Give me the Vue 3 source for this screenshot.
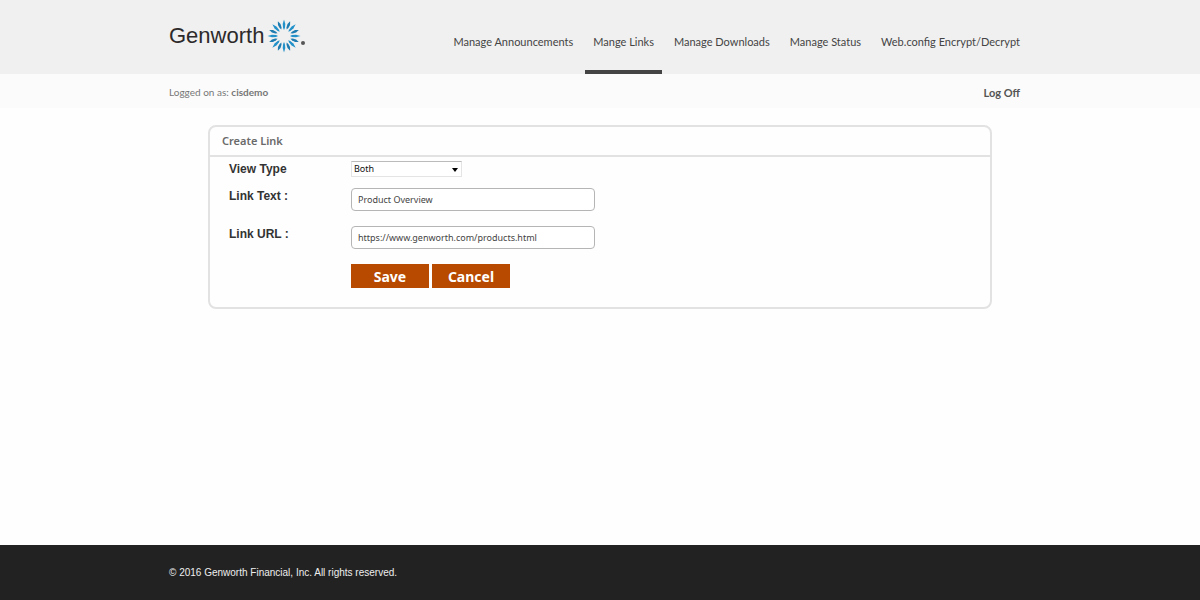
<template>
  <div class="page">
    <header class="header">
      <div class="container header-inner">
        <a href="#" class="logo">
          <span class="logo-text">Genworth</span>
          <svg class="logo-burst" viewBox="-17 -17 34 34" aria-hidden="true">
            <g v-for="n in 8" :key="n" :transform="`rotate(${n * 45})`">
              <path d="M0 -16.5 L1.3 -12 L0.9 -8 L0 -6 L-0.9 -8 L-1.3 -12 Z" fill="#2391c9" />
              <path
                d="M0 -16 L1.4 -12.5 L1 -9 L0 -7 L-1 -9 L-1.4 -12.5 Z"
                fill="#1f7cb0"
                transform="rotate(22.5)"
              />
            </g>
          </svg>
          <span class="logo-mark"></span>
        </a>
        <nav class="nav">
          <a
            v-for="item in navItems"
            :key="item"
            href="#"
            class="nav-link"
            :class="{ active: item === activeItem }"
          >{{ item }}</a>
        </nav>
      </div>
    </header>

    <div class="user-bar">
      <div class="container user-inner">
        <span>Logged on as: <strong>{{ userName }}</strong></span>
        <a href="#" class="log-off">Log Off</a>
      </div>
    </div>

    <main class="content">
      <section class="card">
        <h1 class="card-title">Create Link</h1>
        <form class="form" @submit.prevent>
          <div class="row row-select">
            <label for="view-type">View Type</label>
            <div class="select-wrap">
              <select id="view-type" v-model="viewType">
                <option>Both</option>
                <option>Internal</option>
                <option>External</option>
              </select>
              <span class="arrow"></span>
            </div>
          </div>
          <div class="row">
            <label for="link-text">Link Text :</label>
            <input id="link-text" v-model="linkText" type="text" />
          </div>
          <div class="row">
            <label for="link-url">Link URL :</label>
            <input id="link-url" v-model="linkUrl" type="text" />
          </div>
          <div class="actions">
            <button type="submit">Save</button>
            <button type="button">Cancel</button>
          </div>
        </form>
      </section>
    </main>

    <footer class="footer">
      <div class="container">© 2016 Genworth Financial, Inc. All rights reserved.</div>
    </footer>
  </div>
</template>

<script setup>
import { ref } from 'vue'

const navItems = [
  'Manage Announcements',
  'Mange Links',
  'Manage Downloads',
  'Manage Status',
  'Web.config Encrypt/Decrypt'
]
const activeItem = 'Mange Links'
const userName = 'cisdemo'

const viewType = ref('Both')
const linkText = ref('Product Overview')
const linkUrl = ref('https://www.genworth.com/products.html')
</script>

<style>
body {
  background: #fefefe;
}
</style>

<style scoped>
.page {
  display: flex;
  flex-direction: column;
  min-height: 100vh;
  font-family: "Noto Sans", "Open Sans", sans-serif;
  color: #444;
}

.container {
  box-sizing: border-box;
  width: 100%;
  max-width: 862px;
  margin: 0 auto;
}

a {
  color: inherit;
  text-decoration: none;
}

.header {
  background: #f0f0f0;
}

.header-inner {
  display: flex;
  justify-content: space-between;
  padding-right: 3px;
}

.logo {
  display: flex;
  align-items: center;
  height: 72px;
}

.logo-text {
  font-family: "Liberation Sans", Arial, sans-serif;
  font-size: 22px;
  color: #2d2a2b;
}

.logo-burst {
  width: 34px;
  height: 34px;
  margin-left: 3px;
}

.logo-mark {
  width: 4px;
  height: 4px;
  margin-top: 14px;
  border-radius: 50%;
  background: #555;
}

.nav {
  display: flex;
  gap: 4px;
}

.nav-link {
  box-sizing: border-box;
  height: 74px;
  padding: 34px 8px 0;
  border-bottom: 4px solid transparent;
  font-family: Lato, sans-serif;
  font-size: 11px;
  line-height: 16px;
  white-space: nowrap;
  color: #444;
}

.nav-link.active {
  border-bottom-color: #444;
}

.user-bar {
  background: #fbfbfb;
}

.user-inner {
  display: flex;
  align-items: center;
  justify-content: space-between;
  height: 34px;
  padding: 2px 11px 0 0;
  font-family: Lato, sans-serif;
  font-size: 10px;
  color: #777;
}

.log-off {
  font-size: 11px;
  font-weight: bold;
  color: #555;
}

.content {
  flex: 1;
  padding: 17px 16px;
}

.card {
  box-sizing: border-box;
  max-width: 784px;
  margin: 0 auto;
  border: 2px solid #e2e2e2;
  border-radius: 8px;
}

.card-title {
  margin: 0;
  padding: 0 12px;
  border-bottom: 2px solid #e2e2e2;
  font-size: 11px;
  font-weight: 600;
  line-height: 28px;
  color: #6a6a6a;
}

.form {
  padding: 4px 19px 19px;
}

.row {
  display: flex;
  align-items: flex-start;
  margin-bottom: 15px;
}

.row-select {
  margin-bottom: 11px;
}

.row label {
  width: 122px;
  font-family: "Liberation Sans", Arial, sans-serif;
  font-size: 12px;
  font-weight: bold;
  line-height: 16px;
  color: #333;
}

.row input {
  box-sizing: border-box;
  width: 244px;
  height: 23px;
  padding: 0 6px;
  border: 1px solid #b5b5b5;
  border-radius: 4px;
  background: #fff;
  font-family: "Noto Sans", sans-serif;
  font-size: 9px;
  color: #444;
}

.select-wrap {
  position: relative;
}

.select-wrap select {
  display: block;
  box-sizing: border-box;
  width: 111px;
  height: 16px;
  padding: 0 2px;
  border: 1px solid #e4e4e4;
  border-top-color: #bbb;
  border-radius: 0;
  appearance: none;
  background: #fff;
  font-family: "Noto Sans", sans-serif;
  font-size: 9px;
  line-height: 14px;
  color: #111;
}

.arrow {
  position: absolute;
  top: 7px;
  right: 4px;
  border: 3px solid transparent;
  border-top: 4px solid #000;
  border-bottom: 0;
  pointer-events: none;
}

.actions {
  display: flex;
  gap: 3px;
  padding-left: 122px;
}

.actions button {
  width: 78px;
  height: 24px;
  padding: 0;
  border: 0;
  background: #b84a00;
  font-family: "Noto Sans", sans-serif;
  font-size: 14px;
  font-weight: bold;
  line-height: 25px;
  color: #fff;
}

.footer {
  padding: 20px 0;
  background: #222;
  font-family: "Liberation Sans", Arial, sans-serif;
  font-size: 10px;
  line-height: 15px;
  color: #eee;
}
</style>
